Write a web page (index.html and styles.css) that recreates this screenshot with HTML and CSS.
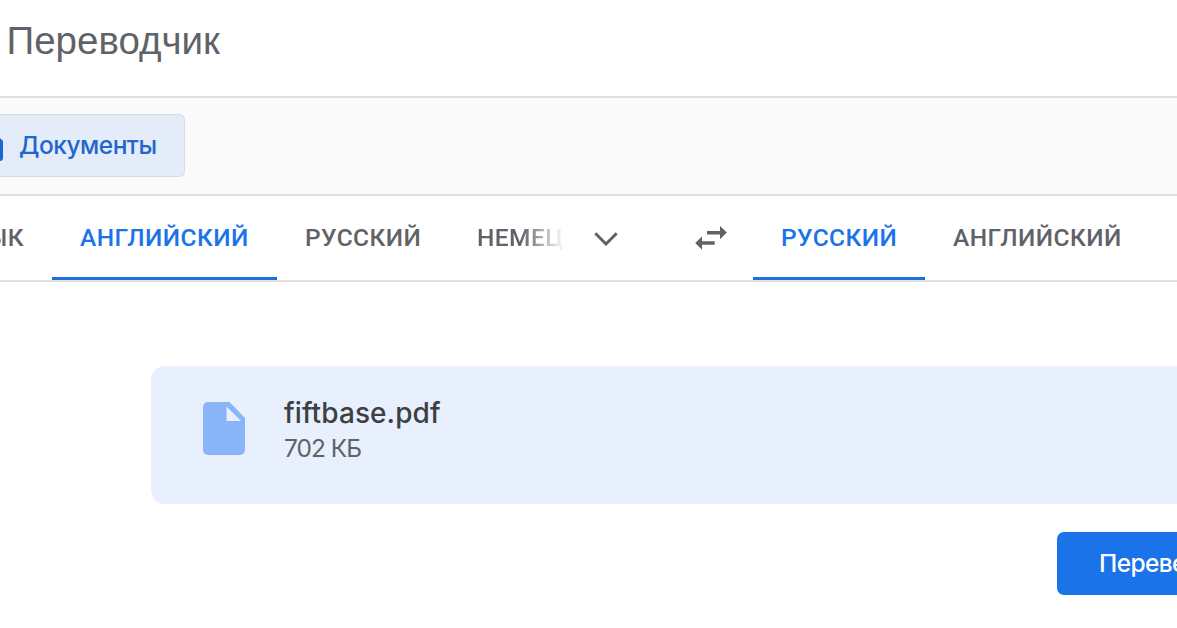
FILE: index.html
```html
<!DOCTYPE html>
<html lang="ru">
<head>
<meta charset="utf-8">
<title>Переводчик</title>
<link rel="stylesheet" href="styles.css">
</head>
<body>
<header class="header"><h1 class="title">Переводчик</h1></header>
<nav class="modes">
  <button class="mode">
    <svg class="mode-icon" viewBox="0 0 20 24"><path d="M3 0h13l4 4v17a3 3 0 0 1-3 3H3a3 3 0 0 1-3-3V3a3 3 0 0 1 3-3z"/></svg>
    <span class="mode-label">Документы</span>
  </button>
</nav>
<div class="languages">
  <div class="source">
    <div class="tab tab-clipped"><span class="label">ЯЗЫК</span></div>
    <div class="tab tab-active tab-long"><span class="label">АНГЛИЙСКИЙ</span></div>
    <div class="tab tab-short"><span class="label">РУССКИЙ</span></div>
    <div class="tab tab-fading"><span class="label">НЕМЕЦКИЙ</span></div>
  </div>
  <button class="more"><svg width="24" height="14" viewBox="0 0 24 14"><path d="M1.300 1.300 12 12 22.700 1.300" fill="none" stroke="currentColor" stroke-width="3"/></svg></button>
  <button class="swap"><svg width="32" height="24" viewBox="0 0 32 24"><path d="M25 0l6.800 6.600L25 13.200V8.400H12V4.900h13zM7 10.500v4.800h12.700v3.500H7v4.900L.2 17.100z" fill="currentColor"/></svg></button>
  <div class="target">
    <div class="tab tab-active tab-short"><span class="label">РУССКИЙ</span></div>
    <div class="tab tab-long"><span class="label">АНГЛИЙСКИЙ</span></div>
  </div>
</div>
<main class="content">
  <section class="file">
    <svg class="file-icon" width="42" height="53" viewBox="0 0 42 53"><path d="M5 0h21.500L42 16v32a5 5 0 0 1-5 5H5a5 5 0 0 1-5-5V5a5 5 0 0 1 5-5z" fill="#8ab4f8"/><path d="M23.500 4.500v14.500h14.700z" fill="#e8f0fe"/></svg>
    <div class="file-info">
      <div class="file-name">fiftbase.pdf</div>
      <div class="file-size">702 КБ</div>
    </div>
  </section>
  <button class="translate">Перевести</button>
</main>
</body>
</html>
```
FILE: styles.css
```css
* { box-sizing: border-box; }
body { margin: 0; width: 1177px; height: 628px; overflow: hidden; background: #fff; color: #5f6368; font-family: Inter, "Liberation Sans", sans-serif; }
button { border: 0; padding: 0; background: none; color: inherit; font: inherit; }
svg { display: block; flex: none; }
.header { height: 96px; padding: 18px 0 0 6.5px; }
.title { margin: 0; font: 400 38.5px/46px "Liberation Sans", sans-serif; }
.modes { height: 100px; padding-top: 16px; background: #fafafa; border-top: 2px solid #e0e0e0; border-bottom: 2px solid #e0e0e0; }
.mode { display: flex; align-items: center; width: 185px; height: 63px; background: #e4ecfa; border: 1px solid #d5dbe7; border-left: 0; border-radius: 0 6px 6px 0; color: #1f66ce; font-size: 24.5px; font-weight: 500; letter-spacing: -.5px; }
.mode-icon { width: 20px; height: 24px; margin: 6px 16px 0 -17px; fill: #1a66d2; }
.mode-label { margin-top: -1px; }
.languages { display: flex; height: 86px; border-bottom: 2px solid #e0e0e0; color: #5f6368; }
.source { display: flex; width: 562px; overflow: hidden; }
.target { display: flex; flex: 1; }
.tab { flex: none; height: 84px; padding: 0 28px; font: 500 24.5px/84px Roboto, sans-serif; letter-spacing: .44px; white-space: nowrap; border-bottom: 3px solid transparent; }
.tab-active { color: #1a73e8; border-bottom-color: #1f70dc; }
.tab-clipped { display: flex; justify-content: flex-end; width: 52px; padding-left: 0; }
.tab-long { width: 225px; }
.tab-short { width: 172px; }
.tab-fading { width: 160px; -webkit-mask-image: linear-gradient(to right, #000 72px, transparent 116px); mask-image: linear-gradient(to right, #000 72px, transparent 116px); }
.more { display: flex; align-items: center; justify-content: center; width: 88px; height: 84px; padding-top: 1px; }
.swap { display: flex; align-items: center; justify-content: center; width: 103px; height: 84px; padding-left: 19px; }
.content { display: flex; flex-direction: column; padding: 84px 0 0 151px; }
.file { display: flex; height: 138px; padding: 36px 0 0 52px; background: #e8f0fe; border-radius: 14px 0 0 14px; }
.file-info { padding-left: 39px; margin-top: -8px; }
.file-name { color: #3c4043; font-size: 28px; line-height: 38px; font-weight: 500; letter-spacing: .08px; }
.file-size { margin-top: -1px; font-size: 24.5px; line-height: 34px; letter-spacing: -1px; }
.translate { align-self: flex-end; flex: none; width: 120px; height: 63px; margin-top: 28px; padding: 0 0 1px 42px; background: #1a73e8; border-radius: 7px 0 0 7px; color: #fff; font-size: 24.5px; font-weight: 500; letter-spacing: -.6px; text-align: left; white-space: nowrap; overflow: hidden; }
```
